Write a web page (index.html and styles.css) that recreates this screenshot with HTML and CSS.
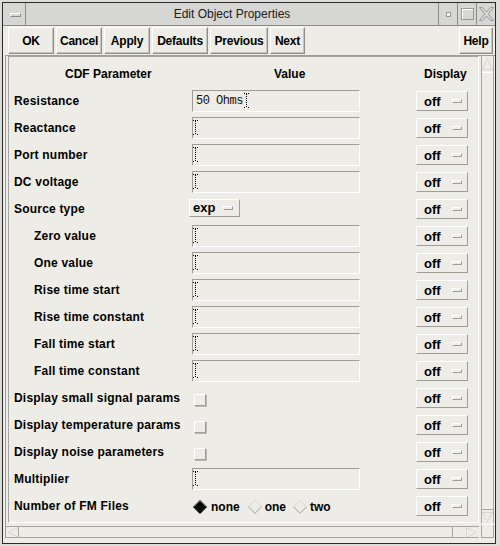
FILE: index.html
```html
<!DOCTYPE html>
<html>
<head>
<meta charset="utf-8">
<title>Edit Object Properties</title>
<link rel="stylesheet" href="styles.css">
</head>
<body>
<div class="frame">
  <div class="win">
    <div class="titlebar">
      <div class="tb-menu"><span class="tb-dash"></span></div>
      <div class="tb-title">Edit Object Properties</div>
      <div class="tb-btn"><span class="tb-min"></span></div>
      <div class="tb-btn"><span class="tb-max"></span></div>
      <div class="tb-btn">
        <svg width="15" height="14" viewBox="0 0 15 14"><path d="M0.5 0.5 H3.5 L7.5 5 L11.5 0.5 H14.5 L9.3 7 L14.5 13.5 H11.5 L7.5 9 L3.5 13.5 H0.5 L5.7 7 Z" fill="none" stroke="#9c9c9c" stroke-width="1"/></svg>
      </div>
    </div>
    <div class="client">
      <div class="toolbar">
        <button class="btn w46">OK</button>
        <button class="btn w46">Cancel</button>
        <button class="btn w46">Apply</button>
        <button class="btn w56">Defaults</button>
        <button class="btn w58">Previous</button>
        <button class="btn w35">Next</button>
        <span class="spacer"></span>
        <button class="btn w34">Help</button>
      </div>
      <div class="scrollwin">
        <div class="viewport">
          <div class="form">
            <div class="hd hd-param">CDF Parameter</div>
            <div class="hd hd-value">Value</div>
            <div></div>
            <div class="hd hd-disp">Display</div>

            <div class="lbl">Resistance</div>
            <div class="val"><div class="field"><span class="ftext">50 Ohms</span><span class="cursor"></span></div></div>
            <div></div>
            <div class="disp"><div class="opt">off<span class="ind"></span></div></div>

            <div class="lbl">Reactance</div>
            <div class="val"><div class="field"><span class="cursor first"></span></div></div>
            <div></div>
            <div class="disp"><div class="opt">off<span class="ind"></span></div></div>

            <div class="lbl">Port number</div>
            <div class="val"><div class="field"><span class="cursor first"></span></div></div>
            <div></div>
            <div class="disp"><div class="opt">off<span class="ind"></span></div></div>

            <div class="lbl">DC voltage</div>
            <div class="val"><div class="field"><span class="cursor first"></span></div></div>
            <div></div>
            <div class="disp"><div class="opt">off<span class="ind"></span></div></div>

            <div class="lbl">Source type</div>
            <div class="val"><div class="opt opt-exp">exp<span class="ind"></span></div></div>
            <div></div>
            <div class="disp"><div class="opt">off<span class="ind"></span></div></div>

            <div class="lbl sub">Zero value</div>
            <div class="val"><div class="field"><span class="cursor first"></span></div></div>
            <div></div>
            <div class="disp"><div class="opt">off<span class="ind"></span></div></div>

            <div class="lbl sub">One value</div>
            <div class="val"><div class="field"><span class="cursor first"></span></div></div>
            <div></div>
            <div class="disp"><div class="opt">off<span class="ind"></span></div></div>

            <div class="lbl sub">Rise time start</div>
            <div class="val"><div class="field"><span class="cursor first"></span></div></div>
            <div></div>
            <div class="disp"><div class="opt">off<span class="ind"></span></div></div>

            <div class="lbl sub">Rise time constant</div>
            <div class="val"><div class="field"><span class="cursor first"></span></div></div>
            <div></div>
            <div class="disp"><div class="opt">off<span class="ind"></span></div></div>

            <div class="lbl sub">Fall time start</div>
            <div class="val"><div class="field"><span class="cursor first"></span></div></div>
            <div></div>
            <div class="disp"><div class="opt">off<span class="ind"></span></div></div>

            <div class="lbl sub">Fall time constant</div>
            <div class="val"><div class="field"><span class="cursor first"></span></div></div>
            <div></div>
            <div class="disp"><div class="opt">off<span class="ind"></span></div></div>

            <div class="lbl">Display small signal params</div>
            <div class="val"><span class="check"></span></div>
            <div></div>
            <div class="disp"><div class="opt">off<span class="ind"></span></div></div>

            <div class="lbl">Display temperature params</div>
            <div class="val"><span class="check"></span></div>
            <div></div>
            <div class="disp"><div class="opt">off<span class="ind"></span></div></div>

            <div class="lbl">Display noise parameters</div>
            <div class="val"><span class="check"></span></div>
            <div></div>
            <div class="disp"><div class="opt">off<span class="ind"></span></div></div>

            <div class="lbl">Multiplier</div>
            <div class="val"><div class="field"><span class="cursor first"></span></div></div>
            <div></div>
            <div class="disp"><div class="opt">off<span class="ind"></span></div></div>

            <div class="lbl">Number of FM Files</div>
            <div class="val">
              <div class="radios">
                <span class="radio">
                  <svg width="14" height="14" viewBox="0 0 14 14"><path d="M7 0.5 L13.5 7 L7 13.5 L0.5 7 Z" fill="#000" stroke="#000"/><path d="M0.8 7 L7 0.8 L13.2 7" fill="none" stroke="#6e6e6e"/></svg>
                  none
                </span>
                <span class="radio r-one">
                  <svg width="14" height="14" viewBox="0 0 14 14"><path d="M0.8 7 L7 0.8 L13.2 7" fill="none" stroke="#ffffff"/><path d="M0.8 7 L7 13.2 L13.2 7" fill="none" stroke="#a8a8a2"/><path d="M7 0.5 L13.5 7 L7 13.5 L0.5 7 Z" fill="none" stroke="#c2c2bc" stroke-width="0.8"/></svg>
                  one
                </span>
                <span class="radio r-two">
                  <svg width="14" height="14" viewBox="0 0 14 14"><path d="M0.8 7 L7 0.8 L13.2 7" fill="none" stroke="#ffffff"/><path d="M0.8 7 L7 13.2 L13.2 7" fill="none" stroke="#a8a8a2"/><path d="M7 0.5 L13.5 7 L7 13.5 L0.5 7 Z" fill="none" stroke="#c2c2bc" stroke-width="0.8"/></svg>
                  two
                </span>
              </div>
            </div>
            <div></div>
            <div class="disp"><div class="opt">off<span class="ind"></span></div></div>
          </div>
        </div>
        <div class="vscroll">
          <div class="arrow-up">
            <svg width="11" height="12" viewBox="0 0 11 12"><path d="M5.5 0.5 L10.5 11.5 L0.5 11.5 Z" fill="none" stroke="#c0c0ba" stroke-dasharray="1 1"/></svg>
          </div>
          <div class="vslider"></div>
          <div class="arrow-down">
            <svg width="11" height="10" viewBox="0 0 11 10"><path d="M0.5 0.5 L10.5 0.5 L5.5 9.5 Z" fill="none" stroke="#c0c0ba" stroke-dasharray="1 1"/></svg>
          </div>
        </div>
        <div class="hscroll">
          <div class="arrow-left">
            <svg width="11" height="11" viewBox="0 0 11 11"><path d="M10.5 0.5 L10.5 10.5 L0.5 5.5 Z" fill="none" stroke="#c0c0ba" stroke-dasharray="1 1"/></svg>
          </div>
          <div class="hslider"></div>
          <div class="htrough"></div>
          <div class="arrow-right">
            <svg width="11" height="11" viewBox="0 0 11 11"><path d="M0.5 0.5 L0.5 10.5 L10.5 5.5 Z" fill="none" stroke="#c0c0ba" stroke-dasharray="1 1"/></svg>
          </div>
        </div>
        <div class="corner"></div>
      </div>
    </div>
  </div>
</div>
</body>
</html>
```

FILE: styles.css
```css
* { box-sizing: border-box; }

html, body {
  margin: 0;
  padding: 0;
  width: 500px;
  height: 546px;
  overflow: hidden;
  background: #dadad6;
  font-family: "Liberation Sans", Arial, sans-serif;
  font-size: 12px;
  color: #000;
}

.frame {
  width: 500px;
  height: 546px;
  padding: 2px 4px 2px 2px;
  background: #dcdcd8;
}

.win {
  width: 494px;
  height: 542px;
  border: 1px solid #2a2a2a;
  display: flex;
  flex-direction: column;
  background: #edece6;
}

/* ---------- title bar ---------- */
.titlebar {
  height: 23px;
  display: flex;
  background: #d6d6d4;
  border-bottom: 1px solid #8c8c8c;
  flex: none;
}

.tb-menu {
  width: 23px;
  border-right: 1px solid #8c8c8c;
  display: flex;
  align-items: center;
  justify-content: center;
}

.tb-dash {
  width: 11px;
  height: 4px;
  border-top: 1px solid #ffffff;
  border-left: 1px solid #ffffff;
  border-bottom: 1px solid #8a8a8a;
  border-right: 1px solid #8a8a8a;
  margin-top: 1px;
  margin-left: 2px;
}

.tb-title {
  flex: 1;
  text-align: center;
  line-height: 22px;
  color: #202020;
  font-size: 12px;
}

.tb-btn {
  width: 19px;
  border-left: 1px solid #8c8c8c;
  display: flex;
  align-items: center;
  justify-content: center;
}

.tb-min {
  width: 5px;
  height: 5px;
  border: 1px solid #9a9a9a;
  background: #f4f4f4;
}

.tb-max {
  width: 13px;
  height: 12px;
  border: 1px solid #9a9a9a;
  box-shadow: inset 1px 1px 0 #ffffff;
}

/* ---------- client ---------- */
.client {
  flex: 1;
  display: flex;
  flex-direction: column;
  padding: 0 0 0 2px;
  background: #edece6;
}

.toolbar {
  display: flex;
  gap: 2px;
  height: 27px;
  margin-top: 1px;
  padding-left: 3px;
  padding-right: 2px;
  flex: none;
}

.spacer { flex: 1; }

.btn {
  height: 27px;
  padding: 0;
  margin: 0;
  font-family: "Liberation Sans", Arial, sans-serif;
  font-weight: bold;
  font-size: 12px;
  color: #000;
  background: #edece6;
  border: 1px solid;
  border-color: #ffffff #8e8e88 #8e8e88 #ffffff;
  box-shadow: inset -1px -1px 0 #c4c4be;
  letter-spacing: -0.2px;
}

.w46 { width: 46px; }
.w56 { width: 56px; }
.w58 { width: 58px; }
.w35 { width: 35px; }
.w34 { width: 34px; }

/* ---------- scrolled window ---------- */
.scrollwin {
  margin-top: 1px;
  border-top: 1px solid #9e9e98;
  border-left: 1px solid #9e9e98;
  padding-left: 2px;
  display: grid;
  grid-template-columns: 471px 13px;
  grid-template-rows: 467px 15px;
  column-gap: 2px;
}

.viewport {
  border: 1px solid;
  border-color: #a6a6a0 #ffffff #ffffff #a6a6a0;
  overflow: hidden;
}

.form {
  display: grid;
  grid-template-columns: 178px 168px 56px 52px;
  grid-auto-rows: 27px;
  padding: 4px 0 0 5px;
  font-weight: bold;
}

.hd {
  line-height: 27px;
  white-space: nowrap;
}
.hd-param { padding-left: 51px; }
.hd-value { padding-left: 82px; }
.hd-disp { padding-left: 8px; }

.lbl {
  line-height: 27px;
  white-space: nowrap;
  letter-spacing: 0.2px;
}
.lbl.sub { padding-left: 20px; }

.val, .disp {
  display: flex;
  align-items: center;
}

.field {
  width: 168px;
  height: 22px;
  margin-top: -1px;
  border: 1px solid;
  border-color: #9e9e98 #ffffff #ffffff #9e9e98;
  display: flex;
  align-items: center;
  padding-left: 3px;
}

.ftext {
  font-family: "Liberation Mono", "Courier New", monospace;
  font-weight: normal;
  font-size: 12px;
  letter-spacing: -0.5px;
  color: #111;
}

.cursor {
  width: 5px;
  height: 15px;
  margin-left: 1px;
  margin-top: -2px;
  background:
    linear-gradient(#000, #000) 0 0 / 1px 1px no-repeat,
    linear-gradient(#000, #000) 2px 0 / 1px 1px no-repeat,
    linear-gradient(#000, #000) 4px 0 / 1px 1px no-repeat,
    repeating-linear-gradient(#000 0 1px, transparent 1px 2px) 2px 1px / 1px 13px no-repeat,
    linear-gradient(#000, #000) 0 14px / 1px 1px no-repeat,
    linear-gradient(#000, #000) 4px 14px / 1px 1px no-repeat;
}
.cursor.first {
  margin-left: -3px;
  width: 5px;
}

.opt {
  width: 52px;
  height: 20px;
  margin-top: -1px;
  border: 1px solid;
  border-color: #ffffff #9e9e98 #9e9e98 #ffffff;
  display: flex;
  align-items: center;
  padding-left: 7px;
  font-weight: bold;
  font-size: 13px;
}

.opt-exp {
  width: 51px;
  height: 18px;
  margin-left: -3px;
  margin-top: -4px;
  padding-left: 3px;
}

.ind {
  width: 10px;
  height: 4px;
  margin-left: auto;
  margin-right: 5px;
  border: 1px solid;
  border-color: #ffffff #9e9e98 #9e9e98 #ffffff;
}
.opt-exp .ind { margin-right: 6px; }

.check {
  width: 12px;
  height: 12px;
  margin-left: 2px;
  margin-top: 2px;
  border: 1px solid;
  border-color: #ffffff #9e9e98 #9e9e98 #ffffff;
  box-shadow: 1px 1px 0 #b8b8b2;
}

.radios {
  display: flex;
  align-items: center;
  margin-left: 1px;
  font-weight: bold;
}

.radio {
  display: flex;
  align-items: center;
  gap: 4px;
}
.radio svg { display: block; }
.r-one { margin-left: 8px; gap: 3px; }
.r-two { margin-left: 7px; gap: 3px; }

/* scrollbars */
.vscroll {
  border-left: 1px solid #a6a6a0;
  border-right: 1px solid #a6a6a0;
  display: flex;
  flex-direction: column;
  align-items: center;
}
.arrow-up { height: 16px; padding-top: 2px; }
.arrow-up svg, .arrow-down svg, .arrow-left svg, .arrow-right svg { display: block; }
.vslider {
  flex: 1;
  width: 100%;
  border-top: 1px solid #ffffff;
  border-bottom: 1px solid #a6a6a0;
}
.arrow-down { height: 13px; padding-top: 2px; }

.hscroll {
  margin-top: 3px;
  height: 12px;
  display: flex;
  align-items: center;
  border-top: 1px solid #a6a6a0;
  border-bottom: 1px solid #a6a6a0;
  margin-left: -2px;
}
.arrow-left { width: 12px; padding-left: 2px; }
.hslider {
  width: 435px;
  height: 100%;
  border-left: 1px solid #a6a6a0;
  border-right: 1px solid #a6a6a0;
}
.htrough { flex: 1; }
.arrow-right { width: 13px; }

.corner {
  margin-top: 1px;
  border: 1px solid #a6a6a0;
  border-top-color: #ffffff;
}
```
